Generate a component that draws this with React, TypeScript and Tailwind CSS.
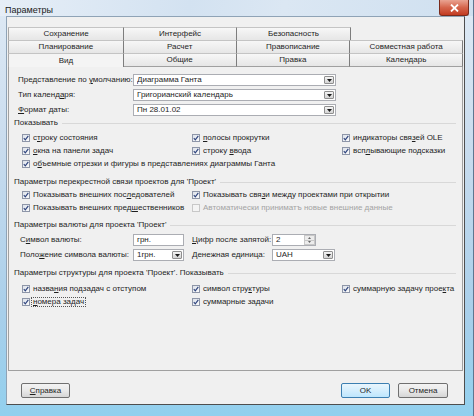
import React from 'react'

// мнемоника: '&' перед буквой — подчёркнутая буква
function Mn({ text }: { text: string }) {
  const i = text.indexOf('&')
  if (i < 0) return <>{text}</>
  return (
    <>
      {text.slice(0, i)}
      <u className="underline-offset-[1px]">{text[i + 1]}</u>
      {text.slice(i + 2)}
    </>
  )
}

const ROWS = [
  ['Сохранение', 'Интерфейс', 'Безопасность'],
  ['Планирование', 'Расчет', 'Правописание', 'Совместная работа'],
  ['Вид', 'Общие', 'Правка', 'Календарь'],
]
const TAB_W = ['w-[116px]', 'w-[113px]', 'w-[114px]', 'w-[113px]']

function Arrow() {
  return (
    <svg width="5" height="3" viewBox="0 0 5 3">
      <path d="M0 0 H5 L2.5 3 Z" fill="#1a1a1a" />
    </svg>
  )
}

function Combo({ value, w }: { value: string; w: string }) {
  return (
    <div className={`${w} h-[12px] bg-white border border-[#abadb3] flex items-center pl-[3px]`}>
      <span className="flex-1 truncate">{value}</span>
      <span className="w-[10px] h-[8px] mr-[1px] border border-[#8f8f8f] rounded-[1px] bg-gradient-to-b from-[#f4f4f4] to-[#d4d4d4] flex items-center justify-center">
        <Arrow />
      </span>
    </div>
  )
}

function Check({ label, on = true, disabled = false, focus = false }: {
  label: string; on?: boolean; disabled?: boolean; focus?: boolean
}) {
  return (
    <div className="flex items-center">
      <span
        className={`w-[8px] h-[8px] shrink-0 border flex items-center justify-center ${
          disabled
            ? 'border-[#c8c8c8] bg-[#f4f4f4]'
            : 'border-[#8e96a8] bg-gradient-to-br from-[#dde2ea] to-[#fbfbfb]'
        }`}
      >
        {on && (
          <svg width="6" height="6" viewBox="0 0 6 6">
            <path d="M0.8 3.2 L2.3 4.8 L5.3 0.8" fill="none" stroke="#30457e" strokeWidth="1.2" />
          </svg>
        )}
      </span>
      {focus ? (
        <span className="ml-[1px] whitespace-nowrap px-[1px] leading-[8px] border border-dotted border-[#555]">
          <Mn text={label} />
        </span>
      ) : (
        <span className={`ml-[2px] whitespace-nowrap px-[1px] ${disabled ? 'text-[#a3a3a3]' : ''}`}>
          <Mn text={label} />
        </span>
      )}
    </div>
  )
}

function Heading({ text, className = '' }: { text: string; className?: string }) {
  return (
    <div className={`flex items-center h-[10px] pl-[5px] pr-[6px] ${className}`}>
      <span className="whitespace-nowrap">{text}</span>
      <span className="flex-1 ml-[4px] h-px bg-[#d8d8d8]" />
    </div>
  )
}

function Btn({ label, w, def = false }: { label: string; w: string; def?: boolean }) {
  return (
    <div
      className={`${w} h-[15px] rounded-[2px] border flex items-center justify-center ${
        def
          ? 'border-[#3c7fb1] bg-gradient-to-b from-[#eaf6fd] to-[#bee6fd]'
          : 'border-[#707070] bg-gradient-to-b from-[#f3f3f3] via-[#e9e9e9] to-[#d6d6d6]'
      }`}
    >
      <Mn text={label} />
    </div>
  )
}

export default function App() {
  return (
    <div className="w-[474px] h-[416px] flex flex-col overflow-hidden bg-[linear-gradient(180deg,#dfeaf5_0%,#c9dcee_35%,#a9cfea_75%,#92d0ee_100%)] border-r border-[#5d7690] font-['Liberation_Sans',Arial,sans-serif] text-[8px] leading-[10px] text-[#1e1e1e]">
      {/* заголовок окна */}
      <div className="h-[16px] shrink-0 flex items-start pl-[5px] pr-[4px] bg-[linear-gradient(100deg,#e6eef7_0%,#d3e2f1_40%,#dbe7f3_60%,#cfe0f0_100%)]">
        <span className="mt-[5px] text-[9px] leading-[10px] text-[#1a1a1a]">Параметры</span>
        <div className="ml-auto w-[30px] h-[16px] rounded-b-[3px] border border-t-0 border-[#7a2b1c] bg-gradient-to-b from-[#e9a392] via-[#d5654c] to-[#c23a20] flex items-center justify-center">
          <svg width="9" height="8" viewBox="0 0 9 8">
            <path d="M1 0.5 L8 7.5 M8 0.5 L1 7.5" stroke="#fff" strokeWidth="1.8" />
          </svg>
        </div>
      </div>

      <div className="flex-1 flex flex-col pl-[6px] pr-[8px] pb-[11px]">
        <div className="flex-1 flex flex-col bg-[#f0f0f0] border-l border-t border-[#8fa3b6] border-r border-b border-r-[#4e4e4e] border-b-[#4e4e4e] px-[1px]">
          {/* вкладки */}
          <div className="mt-[10px] flex flex-col">
            {ROWS.map((row, r) => (
              <div key={r} className={`flex ${r === 2 ? 'h-[14px]' : 'h-[13px]'}`}>
                {row.map((t, i) => {
                  const sel = r === 2 && i === 0
                  return (
                    <div
                      key={t}
                      className={`${TAB_W[i]} flex items-center justify-center border-t border-t-[#c4c4c4] border-r border-r-[#7d7d7d] ${
                        i === 0 ? 'border-l border-l-[#a8a8a8]' : ''
                      } ${r === 2 && !sel ? 'border-b border-b-[#a0a0a0]' : ''} ${
                        sel ? 'bg-[#f4f4f4]' : 'bg-gradient-to-b from-[#f7f7f7] to-[#e6e6e6]'
                      }`}
                    >
                      {t}
                    </div>
                  )
                })}
              </div>
            ))}
          </div>

          {/* страница «Вид» */}
          <div className="h-[304px] shrink-0 flex flex-col border border-t-0 border-[#a0a0a0] pt-[7px]">
            <div className="flex flex-col gap-[3px]">
              {[
                ['Представление по &умолчанию:', 'Диаграмма Ганта'],
                ['Тип календ&аря:', 'Григорианский календарь'],
                ['&Формат даты:', 'Пн 28.01.02'],
              ].map(([l, v]) => (
                <div key={l} className="flex items-center h-[12px] pl-[9px]">
                  <span className="w-[115px]"><Mn text={l} /></span>
                  <Combo value={v} w="w-[203px]" />
                </div>
              ))}
            </div>

            <Heading text="Показывать" className="mt-[2px]" />
            <div className="mt-[3px] flex flex-col">
              <div className="flex items-center h-[13px] pl-[13px]">
                <div className="w-[170px]"><Check label="с&троку состояния" /></div>
                <div className="w-[150px]"><Check label="&полосы прокрутки" /></div>
                <Check label="индикаторы свя&зей OLE" />
              </div>
              <div className="flex items-center h-[13px] pl-[13px]">
                <div className="w-[170px]"><Check label="&окна на панели задач" /></div>
                <div className="w-[150px]"><Check label="строку &ввода" /></div>
                <Check label="всп&лывающие подсказки" />
              </div>
              <div className="flex items-center h-[13px] pl-[13px]">
                <Check label="о&бъемные отрезки и фигуры в представлениях диаграммы Ганта" />
              </div>
            </div>

            <Heading text="Параметры перекрестной связи проектов для 'Проект'" className="mt-[7px]" />
            <div className="mt-[1px] flex flex-col">
              <div className="flex items-center h-[13px] pl-[13px]">
                <div className="w-[170px]"><Check label="Показывать внешних пос&ледователей" /></div>
                <Check label="Показывать свя&зи между проектами при открытии" />
              </div>
              <div className="flex items-center h-[13px] pl-[13px]">
                <div className="w-[170px]"><Check label="Показывать внешних пред&шественников" /></div>
                <Check label="Автоматически приниматъ новые внешние данные" on={false} disabled />
              </div>
            </div>

            <Heading text="Параметры валюты для проекта 'Проект'" className="mt-[6px]" />
            <div className="mt-[4px] flex items-center h-[12px] pl-[11px]">
              <span className="w-[113px]"><Mn text="С&имвол валюты:" /></span>
              <div className="w-[51px] h-[12px] bg-white border border-[#abadb3] flex items-center pl-[3px]">грн.</div>
              <span className="ml-[8px] w-[80px]"><Mn text="&Цифр после запятой:" /></span>
              <div className="w-[44px] h-[12px] bg-white border border-[#abadb3] flex items-center pl-[3px]">
                <span className="flex-1">2</span>
                <span className="w-[11px] h-[10px] flex flex-col">
                  <span className="flex-1 border border-[#c8c8c8] bg-[#ececec] flex items-center justify-center">
                    <svg width="3" height="2" viewBox="0 0 3 2"><path d="M0 2 L1.5 0 L3 2 Z" fill="#666" /></svg>
                  </span>
                  <span className="flex-1 border border-t-0 border-[#c8c8c8] bg-[#ececec] flex items-center justify-center">
                    <svg width="3" height="2" viewBox="0 0 3 2"><path d="M0 0 L3 0 L1.5 2 Z" fill="#666" /></svg>
                  </span>
                </span>
              </div>
            </div>
            <div className="mt-[3px] flex items-center h-[12px] pl-[11px]">
              <span className="w-[113px]"><Mn text="Поло&жение символа валюты:" /></span>
              <Combo value="1грн." w="w-[51px]" />
              <span className="ml-[8px] w-[80px]">Денежная единица:</span>
              <Combo value="UAH" w="w-[63px]" />
            </div>

            <Heading text="Параметры структуры для проекта 'Проект'. Показывать" className="mt-[7px]" />
            <div className="mt-[4px] flex flex-col">
              <div className="flex items-center h-[13px] pl-[13px]">
                <div className="w-[170px]"><Check label="назва&ния подзадач с отступом" /></div>
                <div className="w-[150px]"><Check label="символ стру&ктуры" /></div>
                <Check label="суммарную задачу прое&кта" />
              </div>
              <div className="flex items-center h-[13px] pl-[13px]">
                <div className="w-[170px]"><Check label="&номера задач" focus /></div>
                <Check label="суммарные задачи" />
              </div>
            </div>
          </div>

          {/* кнопки */}
          <div className="mt-[12px] flex items-center pl-[13px] pr-[15px]">
            <Btn label="&Справка" w="w-[49px]" />
            <div className="flex-1" />
            <Btn label="OK" w="w-[49px]" def />
            <div className="ml-[8px]"><Btn label="Отмена" w="w-[50px]" /></div>
          </div>
        </div>
      </div>
    </div>
  )
}
